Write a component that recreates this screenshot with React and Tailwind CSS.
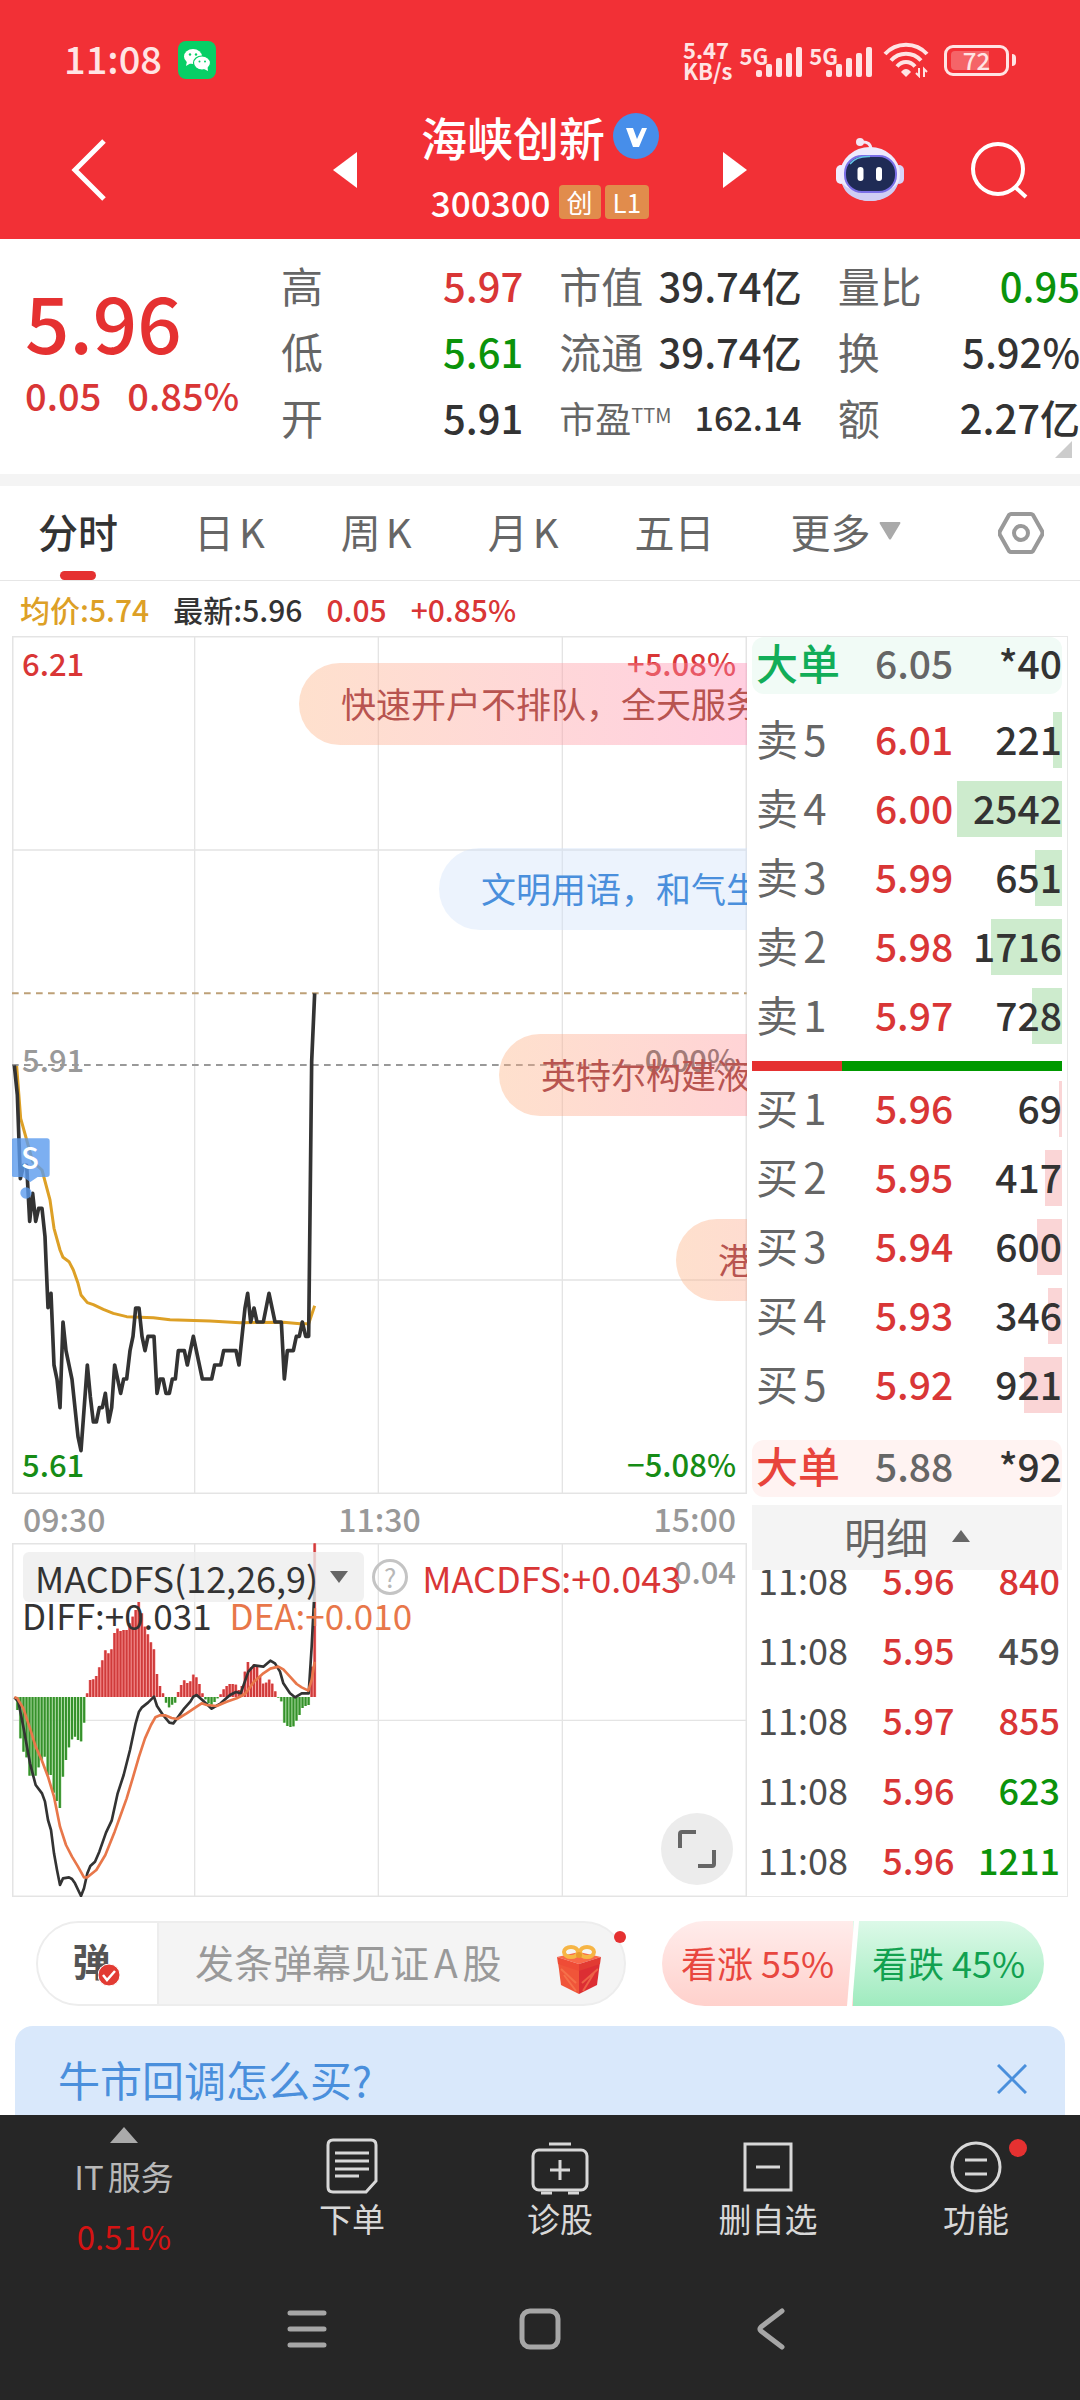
import { clsx } from "clsx";

const SELLS = [
  { label: "卖5", price: "6.01", amount: 221 },
  { label: "卖4", price: "6.00", amount: 2542 },
  { label: "卖3", price: "5.99", amount: 651 },
  { label: "卖2", price: "5.98", amount: 1716 },
  { label: "卖1", price: "5.97", amount: 728 },
];

const BUYS = [
  { label: "买1", price: "5.96", amount: 69 },
  { label: "买2", price: "5.95", amount: 417 },
  { label: "买3", price: "5.94", amount: 600 },
  { label: "买4", price: "5.93", amount: 346 },
  { label: "买5", price: "5.92", amount: 921 },
];

const MAX_AMOUNT = 2542;

const TRADES = [
  { price: "5.96", amount: 840, color: "text-[#d93636]" },
  { price: "5.95", amount: 459, color: "text-[#4d4d4d]" },
  { price: "5.97", amount: 855, color: "text-[#d93636]" },
  { price: "5.96", amount: 623, color: "text-[#0b930b]" },
  { price: "5.96", amount: 1211, color: "text-[#0b930b]" },
];

const STATS = [
  [
    { label: "高", value: "5.97", color: "text-[#d93636]" },
    { label: "低", value: "5.61", color: "text-[#0b930b]" },
    { label: "开", value: "5.91" },
  ],
  [
    { label: "市值", value: "39.74亿" },
    { label: "流通", value: "39.74亿" },
    { label: "市盈", sup: "TTM", value: "162.14", small: true },
  ],
  [
    { label: "量比", value: "0.95", color: "text-[#0b930b]" },
    { label: "换", value: "5.92%" },
    { label: "额", value: "2.27亿" },
  ],
];

const TABS = ["分时", "日K", "周K", "月K", "五日"];

const PRICE_LINE =
  "43,256 52,345 61,596 71,556 80,556 89,724 98,640 107,724 116,685 126,685 135,770 144,983 153,940 162,1155 171,1198 180,1283 189,1026 198,1112 216,1198 234,1370 243,1412 262,1155 271,1250 280,1326 289,1326 298,1283 307,1283 316,1240 326,1326 335,1283 344,1155 362,1240 371,1197 380,1197 390,1112 399,1069 407,984 417,984 426,1069 435,1112 444,1069 462,1069 471,1240 480,1197 489,1197 498,1240 508,1240 517,1197 526,1197 535,1112 553,1112 562,1155 580,1069 607,1197 635,1197 644,1155 662,1155 671,1112 708,1112 717,1155 735,984 743,940 752,1026 762,984 771,1026 790,1026 807,940 825,1026 844,1026 853,1197 862,1112 880,1112 889,1069 898,1069 907,1026 917,1069 926,1069 935,245 944,40";

const AVERAGE_LINE =
  "50,258 62,415 80,480 98,545 126,570 150,660 162,745 180,810 189,832 207,845 220,870 234,910 243,945 262,968 280,974 310,988 340,1000 380,1010 460,1013 510,1019 630,1023 720,1028 850,1027 900,1031 926,1031 944,977";

// end of each one-minute bar, starting at 09:31
const MACD_BARS = [
  690, 775, 815, 832, 887, 887, 887, 862, 840, 830, 885, 885, 938, 963, 984,
  890, 840, 802, 778, 770, 780, 784, 728, 640, 600, 598, 588, 562, 541, 511,
  520, 508, 459, 446, 453, 450, 450, 430, 410, 390, 366, 400, 440, 463, 487,
  508, 582, 618, 640, 668, 682, 674, 668, 636, 615, 601, 609, 604, 584, 592,
  612, 640, 658, 670, 674, 666, 655, 643, 628, 618, 612, 612, 614, 630, 618,
  575, 546, 562, 553, 560, 590, 611, 608, 599, 611, 634, 653, 664, 728, 738,
  741, 739, 722, 705, 684, 678, 675, 560, 190,
];

const MACD_ZERO = 651;

const DIFF_LINE =
  "43,652 55,665 70,740 90,850 107,915 126,940 135,965 144,1020 153,1050 162,1120 171,1170 180,1215 189,1195 207,1192 216,1197 225,1210 243,1248 252,1225 262,1180 271,1158 285,1145 298,1115 318,1058 335,1022 353,940 371,885 390,810 407,730 417,695 426,682 444,668 462,650 471,678 489,705 508,728 520,730 535,710 553,685 571,665 580,650 590,645 607,660 635,686 662,670 690,645 708,636 722,640 745,575 762,556 790,560 811,542 825,550 840,575 850,610 870,640 885,652 905,640 926,640 935,500 944,320";

const DEA_LINE =
  "43,652 52,655 70,685 90,745 107,800 125,840 144,890 162,950 180,1040 198,1095 216,1130 234,1160 252,1192 262,1192 289,1170 316,1125 344,1055 362,1005 380,955 398,895 417,830 435,775 453,735 466,712 480,706 495,706 515,714 532,717 560,700 590,680 605,670 620,675 650,678 680,665 710,655 735,642 762,605 790,580 811,566 835,560 850,568 870,590 890,612 905,622 925,632 935,600 944,545";

function Signal() {
  return (
    <div className="flex items-start">
      <span className="text-[22px] leading-6 font-bold">5G</span>
      <svg viewBox="0 0 46 30" className="-ml-3 mt-1 h-[30px] w-[46px]" fill="currentColor">
        <rect x="0" y="23" width="6" height="7" rx="2" />
        <rect x="10" y="17" width="6" height="13" rx="2" />
        <rect x="20" y="11" width="6" height="19" rx="2" />
        <rect x="30" y="6" width="6" height="24" rx="2" />
        <rect x="40" y="0" width="6" height="30" rx="2" />
      </svg>
    </div>
  );
}

function StatusBar() {
  return (
    <div className="flex h-[108px] items-center justify-between px-16 pt-3 text-[#ffe4e4]">
      <div className="flex items-center gap-4">
        <span className="pb-1 text-[38px] leading-[48px] font-medium">11:08</span>
        <svg viewBox="0 0 38 38" className="size-[38px]">
          <rect width="38" height="38" rx="8" fill="#07cf66" />
          <ellipse cx="15" cy="15.500" rx="9" ry="7.500" fill="#fff" />
          <path d="M9 20l-1 5 5-3z" fill="#fff" />
          <ellipse cx="24" cy="22" rx="8.500" ry="7" fill="#fff" stroke="#07cf66" strokeWidth="1.200" />
          <path d="M26 28l4 2-.5-4z" fill="#fff" />
          <g fill="#07cf66">
            <circle cx="12" cy="13.500" r="1.200" />
            <circle cx="18" cy="13.500" r="1.200" />
            <circle cx="21.500" cy="20.500" r="1" />
            <circle cx="27" cy="20.500" r="1" />
          </g>
        </svg>
      </div>

      <div className="flex items-center gap-[7px]">
        <div className="text-[22px] leading-[21px] font-bold">
          <div>5.47</div>
          <div>KB/s</div>
        </div>
        <Signal />
        <Signal />
        <svg viewBox="0 0 46 36" className="ml-1 h-9 w-[46px]" fill="none" stroke="currentColor" strokeWidth="4">
          <path d="M2 12C13-.5 33-.5 44 12" />
          <path d="M8 18.500C16 9.500 30 9.500 38 18.500" />
          <path d="M14 24.500C19 18.500 27 18.500 32 24.500" />
          <path d="M18 30l5 5 5-5c-3-4-7-4-10 0z" fill="currentColor" stroke="none" />
          <path d="M36 26v8l-3-3M41 35v-8l3 3" strokeWidth="2" />
        </svg>
        <div className="ml-2 flex items-center gap-[3px]">
          <div className="relative flex h-[31px] w-[65px] items-center justify-center rounded-[9px] border-3 border-current">
            <div className="absolute inset-y-[3px] left-1 w-[38px] rounded-l-sm bg-white/25" />
            <span className="relative text-2xl leading-6 font-medium">72</span>
          </div>
          <div className="h-3 w-1 rounded-r bg-current" />
        </div>
      </div>
    </div>
  );
}

function Robot() {
  return (
    <svg viewBox="0 0 68 64" className="h-16 w-[68px]">
      <path d="M25 4q10-1 10 8" fill="none" stroke="#f3e6f5" strokeWidth="3" />
      <circle cx="24" cy="4" r="4" fill="#f3e6f5" />
      <rect x="0" y="27" width="10" height="19" rx="5" fill="#f0ecff" />
      <rect x="58" y="27" width="10" height="19" rx="5" fill="#d8d3f8" />
      <ellipse cx="34" cy="36" rx="30" ry="27" fill="#eeeafd" />
      <path d="M6 45c5 24 51 24 56 0-8 12-48 12-56 0z" fill="#cfcdf4" />
      <rect x="9" y="18" width="51" height="36" rx="17" fill="#1f2b55" stroke="#7a6fe6" strokeWidth="2" />
      <path d="M14 26q6-8 20-7.500" fill="none" stroke="#66c6e8" strokeWidth="1.500" />
      <rect x="21.500" y="29" width="6" height="14" rx="3" fill="#fff" />
      <rect x="40" y="29" width="6" height="14" rx="3" fill="#fff" />
    </svg>
  );
}

function TitleBar() {
  return (
    <header className="grid h-[131px] grid-cols-[1fr_auto_1fr] items-center px-[52px] pb-2 text-white">
      <button aria-label="返回" className="justify-self-start pl-[18px]">
        <svg viewBox="0 0 36 62" className="h-[62px] w-9" fill="none" stroke="currentColor" strokeWidth="5">
          <path d="M34 2L5 31l29 29" />
        </svg>
      </button>

      <div className="flex items-center">
        <button aria-label="上一只">
          <svg viewBox="0 0 24 36" className="h-9 w-6" fill="currentColor">
            <path d="M24 0v36L0 18z" />
          </svg>
        </button>
        <div className="mx-16 flex flex-col items-center gap-4 pb-2">
          <h1 className="flex items-center gap-2 text-[46px] leading-[56px] font-medium">
            海峡创新
            <svg viewBox="0 0 46 46" className="size-[46px]">
              <circle cx="23" cy="23" r="23" fill="#478eea" />
              <path d="M13 15h7l4 11 5-11h5l-8 19h-6z" fill="#fff" />
            </svg>
          </h1>
          <div className="flex h-11 items-center gap-1">
            <span className="mr-1 text-[35px] leading-[44px] font-medium">300300</span>
            <span className="rounded-sm bg-[#e18c4c] px-2 text-[26px] leading-[34px]">创</span>
            <span className="rounded-sm bg-[#e18c4c] px-2 text-[26px] leading-[34px]">L1</span>
          </div>
        </div>
        <button aria-label="下一只">
          <svg viewBox="0 0 24 36" className="h-9 w-6" fill="currentColor">
            <path d="M0 0v36l24-18z" />
          </svg>
        </button>
      </div>

      <div className="flex items-center gap-[66px] justify-self-end">
        <button aria-label="助手">
          <Robot />
        </button>
        <button aria-label="搜索">
          <svg viewBox="0 0 58 58" className="size-[58px]" fill="none" stroke="currentColor" strokeWidth="4">
            <circle cx="28" cy="28" r="25" />
            <path d="M45 46l11 10" />
          </svg>
        </button>
      </div>
    </header>
  );
}

function Quote() {
  return (
    <section className="relative flex pt-[13px] pb-6">
      <div className="w-[281px] shrink-0 pt-6 pl-[25px]">
        <div className="text-[78px] leading-[88px] font-medium text-[#e53131]">5.96</div>
        <div className="flex gap-[26px] text-[38px] leading-[62px] font-medium text-[#d93636]">
          <span>0.05</span>
          <span>0.85%</span>
        </div>
      </div>
      <div className="grid flex-1 grid-cols-3 gap-9">
        {STATS.map((column) => (
          <dl key={column[0].label}>
            {column.map((item) => (
              <div key={item.label} className="flex justify-between leading-[66px]">
                <dt className={clsx("text-[#666]", item.small ? "text-4xl leading-[66px]" : "text-[42px]")}>
                  {item.label}
                  {item.sup && <sup className="text-xl">{item.sup}</sup>}
                </dt>
                <dd
                  className={clsx(
                    "font-medium",
                    item.small ? "text-[34px] leading-[66px]" : "text-[40px]",
                    item.color ?? "text-[#333]"
                  )}
                >
                  {item.value}
                </dd>
              </div>
            ))}
          </dl>
        ))}
      </div>
      <svg viewBox="0 0 17 17" className="absolute right-2 bottom-4 size-[17px]" fill="#ccc">
        <path d="M17 0v17H0z" />
      </svg>
    </section>
  );
}

function PeriodTabs() {
  return (
    <nav className="flex h-[95px] items-center gap-19 border-b border-[#e6e6e6] pr-9 pl-[38px] text-[40px] leading-[56px] text-[#666] [text-autospace:normal]">
      {TABS.map((tab, index) => (
        <button
          key={tab}
          className={clsx("relative flex h-full items-center pb-1", index === 0 && "font-medium text-[#333]")}
        >
          {tab}
          {index === 0 && (
            <span className="absolute bottom-0 left-1/2 h-[9px] w-9 -translate-x-1/2 rounded-full bg-[#e53131]" />
          )}
        </button>
      ))}
      <button className="flex items-center gap-2 pb-1">
        更多
        <svg viewBox="0 0 22 18" className="h-[18px] w-[22px]" fill="#aaa">
          <path d="M1 0h20q1 1 0 2l-9 15q-1 1-2 0L1 2Q0 1 1 0z" />
        </svg>
      </button>
      <button aria-label="设置" className="ml-auto">
        <svg viewBox="0 0 46 44" className="h-11 w-[46px]" fill="none" stroke="#999" strokeWidth="4">
          <path d="M13 3h20q1 0 2 1l9 16q1 2 0 4l-9 16q-1 1-2 1H13q-1 0-2-1L2 24q-1-2 0-4l9-16q1-1 2-1z" />
          <circle cx="23" cy="22" r="7" />
        </svg>
      </button>
    </nav>
  );
}

function PriceChart() {
  return (
    <div className="relative overflow-hidden text-[31px] leading-[44px] font-medium">
      <svg viewBox="36 -1032 2205 2574" className="block w-full" fill="none">
        <g stroke="#e4e4e4" strokeWidth="4">
          <rect x="38" y="-1030" width="2201" height="2570" strokeWidth="5" />
          <path d="M584-1030V1540M1135-1030V1540M1687-1030V1540M38-390H2240M38 900H2240" />
        </g>
        <path d="M36 40H2240" stroke="#bda077" strokeWidth="6" strokeDasharray="20 16" />
        <path d="M36 255H2240" stroke="#999" strokeWidth="6" strokeDasharray="20 16" />
        <polyline points={AVERAGE_LINE} stroke="#dda026" strokeWidth="9" strokeLinejoin="round" />
        <polyline points={PRICE_LINE} stroke="#333" strokeWidth="11" strokeLinejoin="round" />
        <g fill="#5b9bee" fillOpacity="0.8">
          <path d="M42 475h99q8 0 8 8v100q0 8-8 8h-28l-22 15-22-15H42q-8 0-8-8V483q0-8 8-8z" />
          <circle cx="78" cy="639" r="17" />
        </g>
        <text x="90" y="568" textAnchor="middle" fontSize="88" fill="#fff">
          S
        </text>
      </svg>

      <span className="absolute top-[5px] left-[10px] text-[#d93636]">6.21</span>
      <span className="absolute top-[5px] right-[11px] text-[#d93636]">+5.08%</span>
      <span className="absolute top-[401px] left-[10px] text-[#999]">5.91</span>
      <span className="absolute top-[401px] right-[11px] text-[#666]">0.00%</span>
      <span className="absolute bottom-2 left-[10px] text-[#168c16]">5.61</span>
      <span className="absolute right-[11px] bottom-2 text-[#168c16]">−5.08%</span>

      <div className="absolute top-[27px] right-0 left-[287px] overflow-hidden rounded-l-full bg-linear-to-r from-[#fdb282]/40 to-[#ff87b2]/40 pb-0.5 pl-[42px] text-[35px] leading-[80px] font-normal whitespace-nowrap text-[#b85450]">
        快速开户不排队，全天服务
      </div>
      <div className="absolute top-[212px] right-0 left-[427px] overflow-hidden rounded-l-full bg-[#cfe1fa]/40 pb-0.5 pl-[42px] text-[35px] leading-[80px] font-normal whitespace-nowrap text-[#4a8fdc]">
        文明用语，和气生
      </div>
      <div className="absolute top-[398px] right-0 left-[487px] overflow-hidden rounded-l-full bg-linear-to-r from-[#fdb282]/40 to-[#ff9298]/40 pb-0.5 pl-[42px] text-[35px] leading-[80px] font-normal whitespace-nowrap text-[#b85450]">
        英特尔构建液
      </div>
      <div className="absolute top-[583px] right-0 left-[664px] overflow-hidden rounded-l-full bg-linear-to-r from-[#fdb282]/40 to-[#fda88a]/40 pb-0.5 pl-[42px] text-[35px] leading-[80px] font-normal whitespace-nowrap text-[#b85450]">
        港
      </div>
    </div>
  );
}

function MacdChart() {
  return (
    <div className="relative overflow-hidden text-4xl">
      <svg viewBox="36 189 2205 1062" className="block w-full" fill="none">
        <g stroke="#e4e4e4" strokeWidth="4">
          <rect x="38" y="191" width="2201" height="1058" strokeWidth="5" />
          <path d="M584 191V1249M1135 191V1249M1687 191V1249M38 721H2240" />
        </g>
        {MACD_BARS.map((end, index) => {
          const x = 52.2 + index * 9.1;
          const up = end < MACD_ZERO;
          const top = Math.min(end, MACD_ZERO);
          const height = Math.abs(end - MACD_ZERO);
          return (
            <g key={index}>
              <rect x={x - 4.5} y={top} width="9" height={height} fill={up ? "#f58a8a" : "#a5d79b"} />
              <rect x={x - 3} y={top} width="6" height={height} fill={up ? "#cf3b3b" : "#35912b"} />
            </g>
          );
        })}
        <polyline points={DIFF_LINE} stroke="#333" strokeWidth="8" strokeLinejoin="round" />
        <polyline points={DEA_LINE} stroke="#e8774a" strokeWidth="8" strokeLinejoin="round" />
      </svg>

      <span className="absolute top-1.5 right-[11px] text-[31px] leading-[44px] font-medium text-[#999]">0.04</span>
      <div className="absolute top-[9px] left-[11px] flex items-center leading-[50px] whitespace-nowrap">
        <button className="flex items-center gap-3 rounded-md bg-[#eee]/80 pr-4 pl-3 text-[#333]">
          MACDFS(12,26,9)
          <svg viewBox="0 0 18 12" className="h-3 w-[18px]" fill="#666">
            <path d="M0 0h18L9 12z" />
          </svg>
        </button>
        <button
          aria-label="指标说明"
          className="ml-2 flex size-9 items-center justify-center rounded-full border-3 border-[#c4c4c4] text-[26px] leading-none text-[#b8b8b8]"
        >
          ?
        </button>
        <span className="ml-[14px] text-[#d93636]">MACDFS:+0.043</span>
      </div>
      <div className="absolute top-12 left-[10px] flex gap-[18px] text-[35px] leading-[48px] whitespace-nowrap">
        <span className="text-[#333]">DIFF:+0.031</span>
        <span className="text-[#e8774a]">DEA:+0.010</span>
      </div>
      <button
        aria-label="全屏"
        className="absolute right-[14px] bottom-3 flex size-[72px] items-center justify-center rounded-full bg-[#ececec]"
      >
        <svg viewBox="0 0 38 38" className="size-[38px]" fill="none" stroke="#666" strokeWidth="4">
          <path d="M2 18V4q0-2 2-2h14M36 20v14q0 2-2 2H20" />
        </svg>
      </button>
    </div>
  );
}

function Levels({ rows, bar }) {
  return (
    <table className="w-full table-fixed text-[39px] leading-[56px]">
      <tbody>
        {rows.map((row) => (
          <tr key={row.label} className="h-[69px]">
            <th className="w-[39%] p-0 pb-1.5 pl-1 text-left text-[42px] font-normal text-[#666] [text-autospace:normal]">
              {row.label}
            </th>
            <td className="w-1/4 p-0 pb-1.5 pl-0.5 font-medium whitespace-nowrap text-[#d93636]">{row.price}</td>
            <td className="relative p-0 pb-1.5 text-right font-medium text-[#333]">
              <span
                className={clsx("absolute top-[6px] right-0 h-14", bar)}
                style={{ width: `${(row.amount / MAX_AMOUNT) * 94}%` }}
              />
              <span className="relative">{row.amount}</span>
            </td>
          </tr>
        ))}
      </tbody>
    </table>
  );
}

function BigOrder({ price, amount, className }) {
  return (
    <div className={clsx("flex h-[57px] items-center rounded-xl pb-2 pl-1 text-[39px] leading-[56px]", className)}>
      <span className="w-[119px] text-[42px] font-medium">大单</span>
      <span className="font-medium text-[#666]">{price}</span>
      <span className="ml-auto font-medium text-[#333]">*{amount}</span>
    </div>
  );
}

function OrderBook() {
  return (
    <aside className="w-[321px] shrink-0 border-y border-r border-[#e8e8e8] px-[5px]">
      <BigOrder price="6.05" amount="40" className="mb-3 bg-[#f1fbf6] text-[#12ad58]" />
      <Levels rows={SELLS} bar="bg-[#cdebcd]" />
      <div className="mt-[10px] mb-1 flex h-[10px]">
        <div className="w-[29%] bg-[#e53131]" />
        <div className="flex-1 bg-[#009900]" />
      </div>
      <Levels rows={BUYS} bar="bg-[#fad5d6]" />
      <BigOrder price="5.88" amount="92" className="mt-5 bg-[#fff3f2] text-[#e8443c]" />
      <button className="mt-2 flex h-[65px] w-full items-center justify-center gap-6 bg-[#f4f4f4] pb-1 text-[42px] leading-[56px] text-[#666]">
        明细
        <svg viewBox="0 0 18 12" className="h-3 w-[18px]" fill="#666">
          <path d="M0 12h18L9 0z" />
        </svg>
      </button>
      <div className="overflow-hidden">
        <table className="-mt-6 w-full text-4xl">
          <tbody>
            {TRADES.map((trade, index) => (
              <tr key={index} className="h-[70px]">
                <td className="w-[42%] p-0 pb-1 pl-1.5 text-[#4d4d4d]">11:08</td>
                <td className="p-0 pb-1 font-medium text-[#d93636]">{trade.price}</td>
                <td className={clsx("p-0 pr-0.5 pb-1 text-right font-medium", trade.color)}>{trade.amount}</td>
              </tr>
            ))}
          </tbody>
        </table>
      </div>
    </aside>
  );
}

function Gift() {
  return (
    <svg viewBox="0 0 46 50" className="h-[50px] w-[46px]">
      <path d="M2 17l21 8v24L5 40z" fill="#f0563a" />
      <path d="M44 17l-21 8v24l18-9z" fill="#dc2f34" />
      <path d="M8 30l12 16M5 24l15 14M38 28L27 46M42 24L26 38" stroke="#f98254" strokeWidth="2" opacity="0.6" />
      <path d="M1 12l22-5 22 5-22 7z" fill="#f9694a" />
      <path d="M1 12l22 7v7L2 19z" fill="#ef4c36" />
      <path d="M45 12l-22 7v7l21-7z" fill="#e23b33" />
      <g fill="none" stroke="#f6b545" strokeWidth="4">
        <ellipse cx="15" cy="7" rx="7" ry="5" />
        <ellipse cx="31" cy="7" rx="7" ry="5" />
      </g>
      <circle cx="23" cy="10" r="3" fill="#e99b2c" />
    </svg>
  );
}

function CommentBar() {
  return (
    <div className="mt-6 flex h-[85px] gap-9 px-9">
      <div className="relative flex min-w-0 flex-1">
        <div className="flex w-full overflow-hidden rounded-full border-2 border-[#ededed] bg-[#f4f4f4]">
          <button
            aria-label="弹幕开关"
            className="relative w-[121px] shrink-0 border-r-2 border-[#ededed] bg-white pr-3 pb-2 text-[38px] leading-none font-bold text-[#555]"
          >
            弹
            <svg viewBox="0 0 22 22" className="absolute top-[41px] left-[60px] size-[22px]">
              <circle cx="11" cy="11" r="11" fill="#e23b33" stroke="#fff" strokeWidth="1" />
              <path d="M5 11l4 5 8-9" fill="none" stroke="#fff" strokeWidth="2.500" />
            </svg>
          </button>
          <input
            aria-label="发弹幕"
            placeholder="发条弹幕见证A股"
            className="min-w-0 flex-1 bg-transparent pb-1 pl-9 text-[39px] text-[#333] [text-autospace:normal] placeholder:text-[#999]"
          />
          <button aria-label="礼物" className="mt-3 mr-[22px] shrink-0">
            <Gift />
          </button>
        </div>
        <span className="absolute top-[10px] right-0 size-3 rounded-full bg-[#e53131]" />
      </div>
      <div className="relative flex w-[382px] shrink-0 overflow-hidden rounded-full text-4xl">
        <button className="flex-1 bg-linear-to-b from-[#ffeceb] to-[#ffd1cc] pb-1 text-[#e8473f]">看涨 55%</button>
        <button className="flex-1 bg-linear-to-b from-[#dcf9e8] to-[#9febbf] pb-1 text-[#12a150]">看跌 45%</button>
        <svg viewBox="0 0 12 85" className="absolute inset-y-0 left-1/2 h-full w-3 -translate-x-1/2" fill="#fff">
          <path d="M7 0h5L5 85H0z" />
        </svg>
      </div>
    </div>
  );
}

function ToolItem({ label, badge, children }) {
  return (
    <button className="relative flex flex-1 flex-col items-center text-[33px] leading-[46px] text-[#d8d8d8]">
      <svg viewBox="0 0 58 58" className="mt-[22px] size-[58px]" fill="none" stroke="currentColor" strokeWidth="3">
        {children}
      </svg>
      {label}
      {badge && <span className="absolute top-6 right-[53px] size-[18px] rounded-full bg-[#e53131]" />}
    </button>
  );
}

function BottomBar() {
  return (
    <footer className="bg-[#262626]">
      <div className="flex h-[143px] items-start">
        <button className="flex w-[248px] flex-col items-center text-[33px] leading-[46px] text-[#b8b8b8] [text-autospace:normal]">
          <svg viewBox="0 0 28 16" className="mt-3 mb-[10px] h-4 w-7" fill="#aaa">
            <path d="M0 16h28L14 0z" />
          </svg>
          <span>IT服务</span>
          <span className="mt-[14px] text-[#d51313]">0.51%</span>
        </button>
        <ToolItem label="下单">
          <path d="M10 3h38q5 0 5 5v36L43 55H10q-5 0-5-5V8q0-5 5-5z" />
          <path d="M12 16h34M12 24h34M12 32h34M12 39h24" />
        </ToolItem>
        <ToolItem label="诊股">
          <rect x="2" y="13" width="54" height="40" rx="6" />
          <path d="M18 7h22M29 23v20M19 33h20M10 56h11M37 56h11" />
        </ToolItem>
        <ToolItem label="删自选">
          <rect x="6" y="7" width="46" height="46" />
          <path d="M17 30h24" />
        </ToolItem>
        <ToolItem label="功能" badge>
          <circle cx="29" cy="30" r="24" />
          <path d="M18 23h22M18 37h22" />
        </ToolItem>
      </div>
      <div className="flex h-[142px] items-center justify-between px-[287px] text-[#a6a6a6]">
        <button aria-label="最近任务">
          <svg viewBox="0 0 40 40" className="size-10" stroke="currentColor" strokeWidth="5" strokeLinecap="round">
            <path d="M3 4h34M3 20h34M3 36h34" />
          </svg>
        </button>
        <button aria-label="主页">
          <svg viewBox="0 0 42 42" className="size-[42px]" fill="none" stroke="currentColor" strokeWidth="5">
            <rect x="3" y="3" width="36" height="36" rx="8" />
          </svg>
        </button>
        <button aria-label="系统返回">
          <svg viewBox="0 0 40 42" className="h-[42px] w-10" fill="none" stroke="currentColor" strokeWidth="5" strokeLinecap="round" strokeLinejoin="round">
            <path d="M29 3L8 19q-2 2 0 4l21 16" />
          </svg>
        </button>
      </div>
    </footer>
  );
}

export default function App() {
  return (
    <div className="min-h-screen bg-white font-['Noto_Sans_CJK_SC',sans-serif]">
      <div className="bg-[#f23036]">
        <StatusBar />
        <TitleBar />
      </div>
      <Quote />
      <div className="h-3 bg-[#f4f4f4]" />
      <PeriodTabs />

      <div className="flex h-[55px] items-center gap-6 px-5 text-[30px] leading-[44px] font-medium text-[#d93636]">
        <span className="text-[#dda026]">均价:5.74</span>
        <span className="text-[#333]">最新:5.96</span>
        <span>0.05</span>
        <span>+0.85%</span>
      </div>

      <main className="flex px-3">
        <div className="min-w-0 flex-1">
          <PriceChart />
          <div className="flex h-[49px] items-center justify-between px-[11px] pb-0.5 text-[32px] leading-[44px] font-medium text-[#999]">
            <span>09:30</span>
            <span>11:30</span>
            <span>15:00</span>
          </div>
          <MacdChart />
        </div>
        <OrderBook />
      </main>

      <CommentBar />

      <div className="mx-[15px] mt-5 flex h-[89px] items-center justify-between rounded-t-[18px] bg-[#d9e8fb] pt-4 pr-[38px] pl-[43px] text-[42px] leading-[56px] text-[#4a8fdc]">
        <a href="#bull-market">牛市回调怎么买?</a>
        <button aria-label="关闭">
          <svg viewBox="0 0 30 30" className="size-[30px]" fill="none" stroke="currentColor" strokeWidth="3">
            <path d="M1 1l28 28M29 1L1 29" />
          </svg>
        </button>
      </div>
      <BottomBar />
    </div>
  );
}
